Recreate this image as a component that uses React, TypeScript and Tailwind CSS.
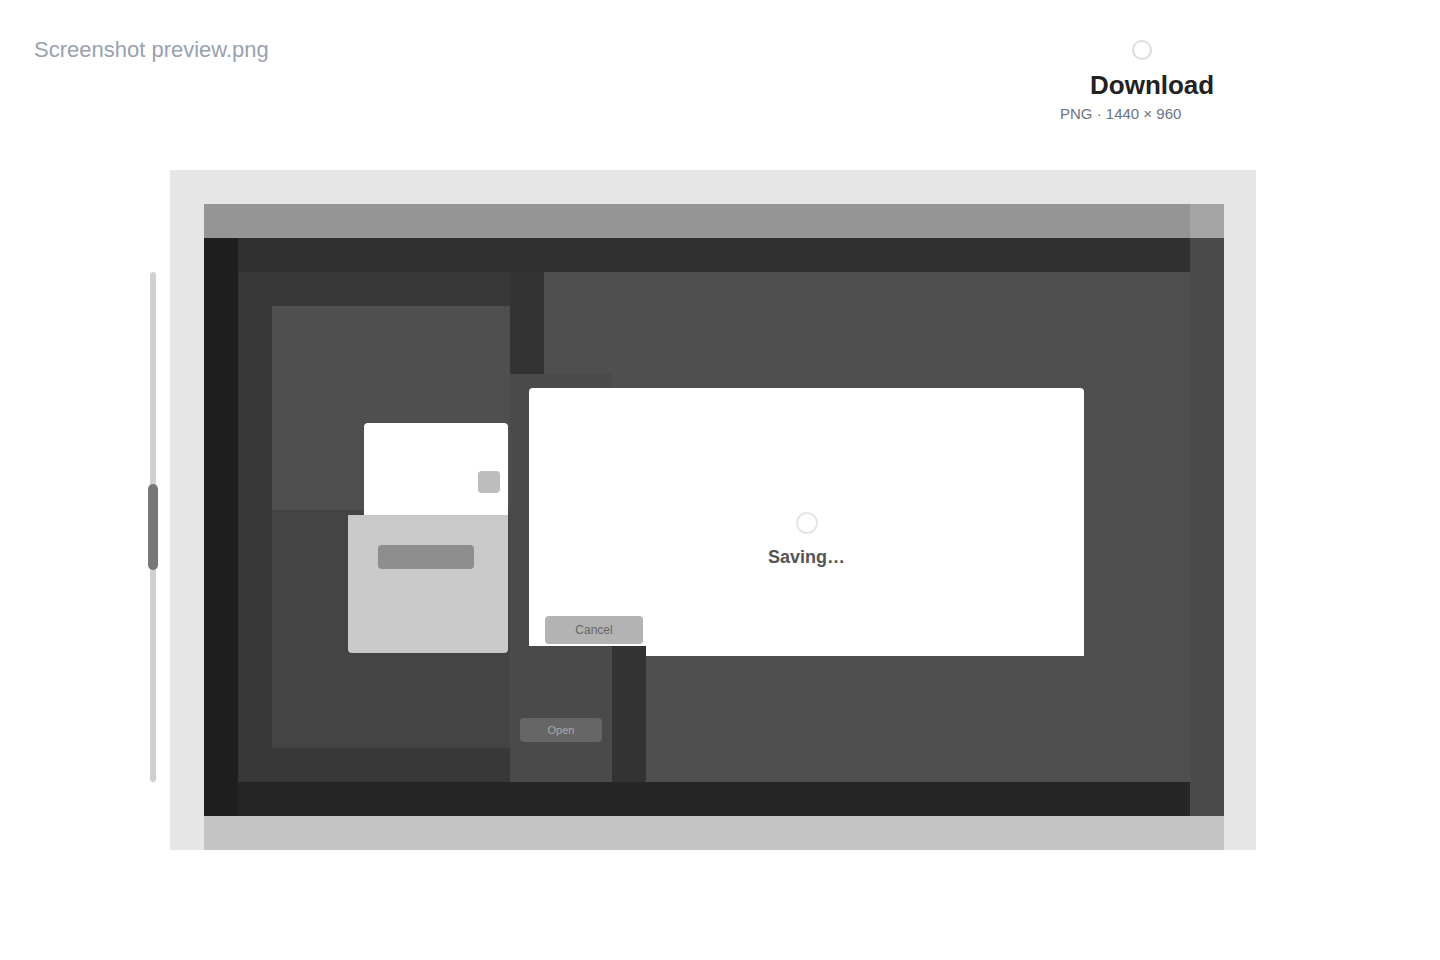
function Header() {
  return (
    <header className="flex h-[170px] px-[34px]">
      <div className="pt-[36px] text-[22px] leading-[28px] text-gray-400">
        Screenshot preview.png
      </div>
      <div className="ml-auto mr-[148px] flex w-[204px] flex-col pt-[40px]">
        <div className="ml-[78px] h-[20px] w-[20px] rounded-full border-2 border-[#dcdcdc]" />
        <div className="ml-[36px] mt-[10px] text-[26px] font-bold leading-[30px] text-[#222]">
          Download
        </div>
        <div className="ml-[6px] mt-[4px] text-[15px] leading-[20px] text-gray-500">
          PNG · 1440 × 960
        </div>
      </div>
    </header>
  );
}

function Scrollbar() {
  return (
    <div className="flex w-[34px] justify-center pt-[102px]">
      <div className="relative h-[510px] w-[6px] rounded-full bg-[#d0d0d0]">
        <div className="absolute left-[-2px] top-[212px] h-[86px] w-[10px] rounded-full bg-[#777]" />
      </div>
    </div>
  );
}

function Screenshot() {
  return (
    <div className="relative flex h-[612px] w-[1020px] flex-col bg-[#4f4f4f]">
      {/* window chrome */}
      <div className="flex h-[34px] shrink-0 bg-[#959595]">
        <div className="flex-1" />
        <div className="w-[34px] bg-[#a5a5a5]" />
      </div>

      <div className="flex flex-1">
        <div className="w-[34px] bg-[#1f1f1f]" />
        <div className="flex flex-1 flex-col">
          <div className="flex flex-1 flex-col">
            <div className="h-[34px] bg-[#303030]" />
            <div className="flex flex-1">
              {/* sidebar */}
              <div className="flex w-[272px] flex-col bg-[#383838] pb-[34px] pl-[34px] pt-[34px]">
                <div className="h-[204px] bg-[#4f4f4f]" />
                <div className="flex-1 bg-[#444]" />
              </div>
              {/* middle column */}
              <div className="flex w-[102px] flex-col">
                <div className="flex h-[102px]">
                  <div className="w-[34px] bg-[#333]" />
                  <div className="flex-1 bg-[#4f4f4f]" />
                </div>
                <div className="flex flex-1 flex-col items-center justify-end bg-[#4a4a4a] pb-[40px]">
                  <div className="flex h-[24px] w-[82px] items-center justify-center rounded-sm bg-[#666] text-[11px] text-[#aaa]">
                    Open
                  </div>
                </div>
              </div>
              {/* divider */}
              <div className="flex w-[34px] flex-col">
                <div className="h-[374px] bg-[#4f4f4f]" />
                <div className="flex-1 bg-[#333]" />
              </div>
              <div className="flex-1 bg-[#4f4f4f]" />
            </div>
          </div>
          <div className="h-[34px] bg-[#262626]" />
        </div>
        <div className="w-[34px] bg-[#4a4a4a]" />
      </div>

      {/* popover card */}
      <div className="absolute left-[144px] top-[219px] flex w-[160px] flex-col items-end">
        <div className="flex h-[92px] w-[144px] items-start justify-end rounded-t-sm bg-white p-[8px]">
          <div className="mt-[40px] h-[22px] w-[22px] rounded-sm bg-[#bdbdbd]" />
        </div>
        <div className="flex h-[138px] w-[160px] flex-col rounded-b-sm bg-[#c9c9c9] px-[30px] pt-[30px]">
          <div className="h-[24px] w-[96px] rounded-sm bg-[#8e8e8e]" />
        </div>
      </div>

      {/* dialog */}
      <div className="absolute left-[325px] top-[184px] flex w-[555px] flex-col">
        <div className="flex h-[258px] flex-col items-center rounded-t-sm bg-white">
          <div className="mt-[124px] h-[22px] w-[22px] rounded-full border-2 border-[#e6e6e6]" />
          <div className="mt-[12px] text-[18px] font-bold leading-[22px] text-[#555]">
            Saving…
          </div>
          <div className="mb-[2px] mt-auto self-start pl-[16px]">
            <div className="flex h-[28px] w-[98px] items-center justify-center rounded-sm bg-[#b3b3b3] text-[12px] text-[#666]">
              Cancel
            </div>
          </div>
        </div>
        <div className="ml-[117px] h-[10px] bg-white" />
      </div>
    </div>
  );
}

export default function App() {
  return (
    <div className="h-[960px] w-[1440px] bg-white font-['Liberation_Sans',sans-serif]">
      <Header />
      <section className="flex pl-[136px]">
        <Scrollbar />
        <div className="flex w-[1086px] flex-col bg-[#e6e6e6] pl-[34px] pr-[32px] pt-[34px]">
          <Screenshot />
          <div className="h-[34px] w-[1020px] bg-[#c4c4c4]" />
        </div>
      </section>
    </div>
  );
}
